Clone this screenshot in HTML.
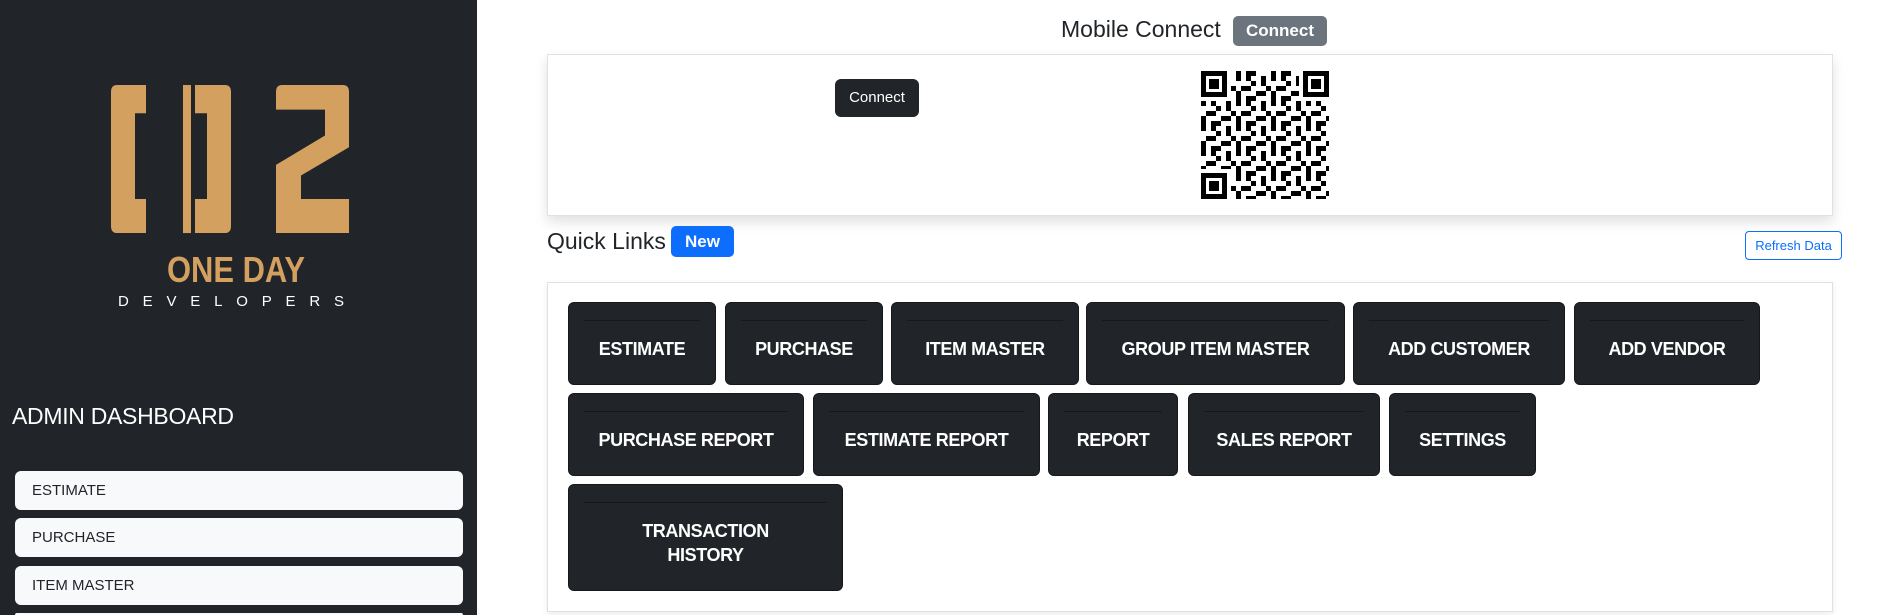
<!DOCTYPE html>
<html style="overflow:hidden;width:1897px;height:615px"><head><meta charset="utf-8"><style>
*{box-sizing:border-box;margin:0;padding:0}
body{width:1897px;height:615px;overflow:hidden;background:#fff;font-family:"Liberation Sans",sans-serif;position:relative}
.side{position:absolute;left:0;top:0;width:477px;height:615px;background:#212529;overflow:hidden}
.adm{position:absolute;left:12px;top:403px;color:#fff;font-size:23px;letter-spacing:-0.3px}
.si{position:absolute;left:15px;width:448px;height:39px;background:#f8f9fa;border-radius:6px;color:#212529;font-size:15px;padding:11px 0 0 17px}
.abs{position:absolute}
.card{position:absolute;background:#fff;border:1px solid #dee2e6;box-shadow:0 6px 12px rgba(0,0,0,.12)}
.t{font-size:23px;color:#212529}
.badge{position:absolute;color:#fff;font-weight:bold;font-size:17px;border-radius:5px;text-align:center}
.b{position:absolute;background:#212529;border:1px solid #15181b;border-radius:6px;color:#fff;font-weight:bold;font-size:18px;display:flex;align-items:center;justify-content:center;text-align:center;line-height:24px;padding-top:10px;letter-spacing:-0.4px}
.b::before{content:"";position:absolute;left:15px;right:15px;top:17px;border-top:1px solid #16191c}
</style></head><body>
<div class="side">
<svg class="abs" style="left:0;top:0" width="477" height="330">
<g fill="#d4a060" transform="translate(0,85) scale(1,1.175) translate(0,-73)">
<path d="M111,79 Q111,73 117,73 L146,73 L146,97 L135,97 L135,170 L146,170 L146,199 L117,199 Q111,199 111,193 Z"/>
<rect x="183" y="73" width="8" height="126"/>
<path d="M195,73 L225,73 Q231,73 231,79 L231,193 Q231,199 225,199 L195,199 L195,170 L207,170 L207,97 L195,97 Z"/>
<path d="M276,79 Q276,73 282,73 L343,73 Q349,73 349,79 L349,126 L301,150 L301,170 L349,170 L349,199 L276,199 L276,141 L325,116 L325,94 L276,94 Z"/>
</g>
<text x="167" y="282" fill="#d4a060" font-family="Liberation Sans" font-weight="bold" font-size="36" textLength="138" lengthAdjust="spacingAndGlyphs">ONE DAY</text>
<text x="118" y="306" fill="#fff" font-family="Liberation Sans" font-size="15" textLength="226" lengthAdjust="spacing">DEVELOPERS</text>
</svg>
<div class="adm">ADMIN DASHBOARD</div>
<div class="si" style="top:471px">ESTIMATE</div>
<div class="si" style="top:518px">PURCHASE</div>
<div class="si" style="top:566px">ITEM MASTER</div>
<div class="si" style="top:613px;height:2px;padding:0;border-radius:6px 6px 0 0"></div>
</div>

<div class="abs t" style="left:1061px;top:16px">Mobile Connect</div>
<div class="badge" style="left:1233px;top:16px;width:94px;height:30px;background:#6c757d;padding-top:5px">Connect</div>

<div class="card" style="left:547px;top:54px;width:1286px;height:162px"></div>
<div class="abs" style="left:835px;top:79px;width:84px;height:38px;background:#212529;border-radius:6px;color:#fff;font-size:15px;text-align:center;padding-top:10px">Connect</div>
<svg class="abs" style="left:1201px;top:71px" width="128" height="128">
<defs><pattern id="p" width="35" height="25" patternUnits="userSpaceOnUse">
<g fill="#000"><rect x="0" y="0" width="5" height="10"/><rect x="10" y="0" width="10" height="5"/><rect x="25" y="5" width="5" height="10"/><rect x="5" y="15" width="10" height="5"/><rect x="15" y="10" width="5" height="5"/><rect x="20" y="20" width="10" height="5"/><rect x="30" y="15" width="5" height="5"/><rect x="0" y="20" width="5" height="5"/><rect x="10" y="5" width="5" height="5"/></g></pattern></defs>
<rect width="128" height="128" fill="url(#p)"/>
<g><rect x="0" y="0" width="30" height="30" fill="#fff"/><rect x="98" y="0" width="30" height="30" fill="#fff"/><rect x="0" y="98" width="30" height="30" fill="#fff"/>
<g fill="none" stroke="#000" stroke-width="5"><rect x="2.5" y="2.5" width="21" height="21"/><rect x="104.5" y="2.5" width="21" height="21"/><rect x="2.5" y="104.5" width="21" height="21"/></g>
<g fill="#000"><rect x="8" y="8" width="10" height="10"/><rect x="110" y="8" width="10" height="10"/><rect x="8" y="110" width="10" height="10"/></g></g>
</svg>

<div class="abs t" style="left:547px;top:228px">Quick Links</div>
<div class="badge" style="left:671px;top:226px;width:63px;height:31px;background:#0d6efd;padding-top:6px">New</div>
<div class="abs" style="left:1745px;top:231px;width:97px;height:29px;border:1px solid #0d6efd;border-radius:4px;color:#0d6efd;font-size:13px;text-align:center;padding-top:6px">Refresh Data</div>

<div class="card" style="left:547px;top:282px;width:1286px;height:330px;box-shadow:0 2px 6px rgba(0,0,0,.08)"></div>
<div class="b" style="left:568px;top:302px;width:148px;height:83px">ESTIMATE</div>
<div class="b" style="left:725px;top:302px;width:158px;height:83px">PURCHASE</div>
<div class="b" style="left:891px;top:302px;width:188px;height:83px">ITEM MASTER</div>
<div class="b" style="left:1086px;top:302px;width:259px;height:83px">GROUP ITEM MASTER</div>
<div class="b" style="left:1353px;top:302px;width:212px;height:83px">ADD CUSTOMER</div>
<div class="b" style="left:1574px;top:302px;width:186px;height:83px">ADD VENDOR</div>
<div class="b" style="left:568px;top:393px;width:236px;height:83px">PURCHASE REPORT</div>
<div class="b" style="left:813px;top:393px;width:227px;height:83px">ESTIMATE REPORT</div>
<div class="b" style="left:1048px;top:393px;width:130px;height:83px">REPORT</div>
<div class="b" style="left:1188px;top:393px;width:192px;height:83px">SALES REPORT</div>
<div class="b" style="left:1389px;top:393px;width:147px;height:83px">SETTINGS</div>
<div class="b" style="left:568px;top:484px;width:275px;height:107px">TRANSACTION<br>HISTORY</div>
</body></html>
